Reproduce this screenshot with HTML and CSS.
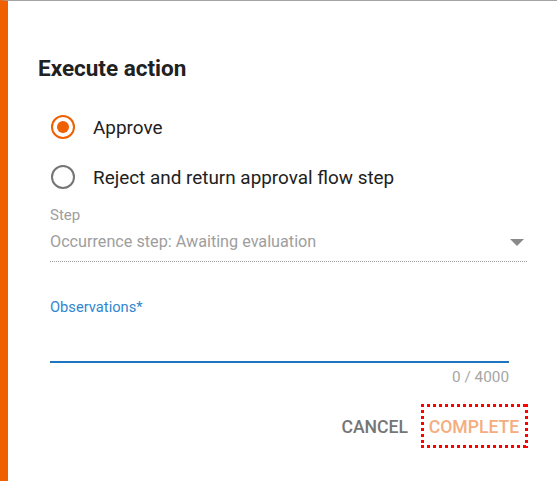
FILE: index.html
```html
<!DOCTYPE html>
<html>
<head>
<meta charset="utf-8">
<link rel="stylesheet" href="styles.css">
</head>
<body>
<div class="dialog">
  <h1 class="title">Execute action</h1>
  <div class="form">
    <div class="radios">
      <label class="radio">
        <svg class="radio-icon" width="26" height="26" viewBox="0 0 26 26"><circle cx="13" cy="13" r="11" fill="none" stroke="#ef6100" stroke-width="2"/><circle cx="13" cy="13" r="6" fill="#ef6100"/></svg>
        <span>Approve</span>
      </label>
      <label class="radio">
        <svg class="radio-icon" width="26" height="26" viewBox="0 0 26 26"><circle cx="13" cy="13" r="11" fill="none" stroke="#757575" stroke-width="2"/></svg>
        <span>Reject and return approval flow step</span>
      </label>
    </div>
    <div class="select-field">
      <div class="field-label">Step</div>
      <div class="select-value">
        <span>Occurrence step: Awaiting evaluation</span>
        <span class="arrow"></span>
      </div>
    </div>
    <div class="text-field">
      <div class="obs-label">Observations*</div>
      <div class="obs-input"></div>
      <div class="counter">0 / 4000</div>
    </div>
  </div>
  <div class="actions">
    <button class="btn cancel">CANCEL</button>
    <button class="btn complete">COMPLETE</button>
  </div>
</div>
</body>
</html>
```
FILE: styles.css
```css
html, body {
  margin: 0;
  padding: 0;
  background: #fff;
}
body {
  font-family: Roboto, "Noto Sans", sans-serif;
  width: 557px;
  height: 481px;
  overflow: hidden;
}
.dialog {
  box-sizing: border-box;
  height: 481px;
  border-top: 1px solid #a3a3a3;
  border-left: 8px solid #ef6100;
  padding: 0 0 0 30px;
  display: flex;
  flex-direction: column;
}
.title {
  margin: 54px 0 0 0;
  font-size: 22.5px;
  font-weight: 700;
  line-height: 26px;
  color: #212121;
}
.form {
  padding-left: 12px;
  display: flex;
  flex-direction: column;
}
.radios {
  margin-top: 33px;
  display: flex;
  flex-direction: column;
  gap: 24px;
}
.radio {
  display: flex;
  align-items: center;
  height: 26px;
  font-size: 18.9px;
  color: #212121;
}
.radio-icon {
  flex: none;
  margin-right: 17px;
}
.select-field {
  margin-top: 16px;
  width: 477px;
}
.field-label {
  font-size: 15px;
  line-height: 18px;
  color: #9e9e9e;
}
.select-value {
  display: flex;
  align-items: center;
  justify-content: space-between;
  font-size: 16.2px;
  line-height: 20px;
  color: #9e9e9e;
  padding: 8px 0 9px 0;
  border-bottom: 1px dotted #9e9e9e;
}
.arrow {
  width: 0;
  height: 0;
  border-left: 7px solid transparent;
  border-right: 7px solid transparent;
  border-top: 7px solid #8a8a8a;
  margin-right: 3px;
}
.text-field {
  margin-top: 36px;
  width: 459px;
  display: flex;
  flex-direction: column;
}
.obs-label {
  font-size: 14.7px;
  line-height: 18px;
  color: #2f86cf;
}
.obs-input {
  height: 45px;
  border-bottom: 2px solid #1f76bf;
}
.counter {
  align-self: flex-end;
  margin-top: 5px;
  font-size: 15.3px;
  line-height: 18px;
  color: #a6a6a6;
}
.actions {
  margin-top: 18px;
  display: flex;
  justify-content: flex-end;
  align-items: center;
  padding-right: 29px;
  gap: 13px;
}
.btn {
  border: none;
  font-family: Roboto, "Noto Sans", sans-serif;
  font-size: 17.6px;
  font-weight: 500;
  line-height: 20px;
  padding: 0;
  cursor: pointer;
  background: none;
}
.cancel {
  color: #757575;
  margin-top: 2px;
}
.complete {
  color: #f5ad7e;
  width: 107px;
  height: 44px;
  padding: 2px 1px 0 0;
  text-align: center;
  background:
    repeating-linear-gradient(90deg, #ff0000 0 3px, transparent 3px 6px) left top / 100% 3px no-repeat,
    repeating-linear-gradient(90deg, #ff0000 0 3px, transparent 3px 6px) left bottom / 100% 3px no-repeat,
    repeating-linear-gradient(180deg, #ff0000 0 3px, transparent 3px 6px) left top / 3px 100% no-repeat,
    repeating-linear-gradient(180deg, #ff0000 0 3px, transparent 3px 6px) right top / 3px 100% no-repeat;
}
```
